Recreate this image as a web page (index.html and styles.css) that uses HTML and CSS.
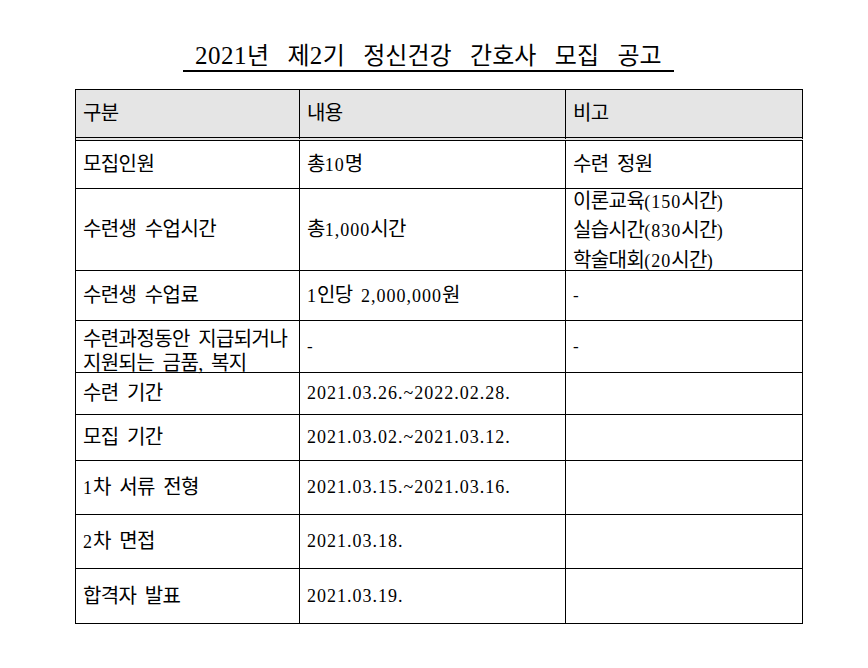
FILE: index.html
```html
<!DOCTYPE html>
<html lang="ko">
<head>
<meta charset="utf-8">
<title>2021년 제2기 정신건강 간호사 모집 공고</title>
<link rel="stylesheet" href="styles.css">
</head>
<body>
<div class="page">
  <h1 class="title"><span class="tn">2021</span>년 제<span class="tn">2</span>기 정신건강 간호사 모집 공고</h1>
  <div class="sheet">
    <div class="cell head"><span>구분</span></div>
    <div class="cell head"><span>내용</span></div>
    <div class="cell head"><span>비고</span></div>

    <div class="cell"><span>모집인원</span></div>
    <div class="cell"><span>총<span class="n">10</span>명</span></div>
    <div class="cell"><span>수련 정원</span></div>

    <div class="cell"><span>수련생 수업시간</span></div>
    <div class="cell"><span>총<span class="n">1,000</span>시간</span></div>
    <div class="cell lines">
      <div>이론교육<span class="n">(150</span>시간<span class="n">)</span></div>
      <div>실습시간<span class="n">(830</span>시간<span class="n">)</span></div>
      <div>학술대회<span class="n">(20</span>시간<span class="n">)</span></div>
    </div>

    <div class="cell"><span>수련생 수업료</span></div>
    <div class="cell"><span><span class="n">1</span>인당 <span class="n">2,000,000</span>원</span></div>
    <div class="cell"><span class="dash">-</span></div>

    <div class="cell two"><span>수련과정동안 지급되거나<br>지원되는 금품, 복지</span></div>
    <div class="cell"><span class="dash">-</span></div>
    <div class="cell"><span class="dash">-</span></div>

    <div class="cell"><span>수련 기간</span></div>
    <div class="cell"><span class="n">2021.03.26.~2022.02.28.</span></div>
    <div class="cell"></div>

    <div class="cell"><span>모집 기간</span></div>
    <div class="cell"><span class="n">2021.03.02.~2021.03.12.</span></div>
    <div class="cell"></div>

    <div class="cell"><span><span class="n">1</span>차 서류 전형</span></div>
    <div class="cell"><span class="n">2021.03.15.~2021.03.16.</span></div>
    <div class="cell"></div>

    <div class="cell"><span><span class="n">2</span>차 면접</span></div>
    <div class="cell"><span class="n">2021.03.18.</span></div>
    <div class="cell"></div>

    <div class="cell"><span>합격자 발표</span></div>
    <div class="cell"><span class="n">2021.03.19.</span></div>
    <div class="cell"></div>
  </div>
</div>
</body>
</html>
```
FILE: styles.css
```css
html, body {
  margin: 0;
  padding: 0;
  background: #ffffff;
}

body {
  font-family: "Liberation Serif", "Noto Sans CJK KR", serif;
  color: #000000;
}

.page {
  padding: 42px 0 0 75px;
}

.title {
  display: block;
  width: fit-content;
  margin: 0 0 0 108px;
  padding: 0 12px;
  font-size: 24px;
  font-weight: normal;
  line-height: 27px;
  word-spacing: 12.5px;
  border-bottom: 2px solid #000000;
}

.title .tn {
  font-size: 25px;
  letter-spacing: 0.5px;
}

.sheet {
  margin-top: 17px;
  display: grid;
  grid-template-columns: 224px 266px 237px;
  grid-template-rows: 51px 48px 82px 50px 52px 42px 46px 54px 54px 55px;
  width: max-content;
  border-left: 1px solid #000000;
  border-top: 1px solid #000000;
}

.cell {
  box-sizing: border-box;
  display: flex;
  align-items: center;
  padding-left: 7px;
  border-right: 1px solid #000000;
  border-bottom: 1px solid #000000;
  font-size: 20px;
  line-height: 25px;
  letter-spacing: -0.6px;
  word-spacing: 4px;
  white-space: nowrap;
}

.cell.head {
  background: #e5e5e5;
  border-bottom: 4px double #000000;
}

.cell.lines {
  flex-direction: column;
  align-items: flex-start;
  justify-content: center;
  padding-top: 3px;
  line-height: 28.5px;
}

.cell.two {
  padding-top: 8px;
  line-height: 24px;
}

.n {
  font-size: 18px;
  letter-spacing: 1px;
}

.dash {
  font-size: 17px;
}
```
